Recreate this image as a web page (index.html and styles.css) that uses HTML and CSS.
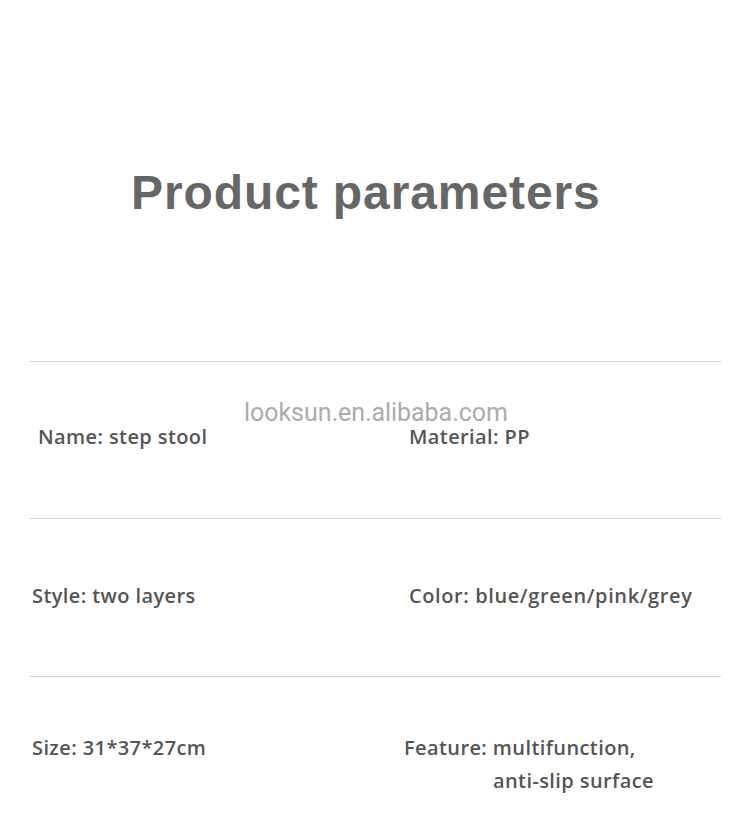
FILE: index.html
```html
<!DOCTYPE html>
<html>
<head>
<meta charset="utf-8">
<link rel="stylesheet" href="styles.css">
</head>
<body>
<div class="page">
  <h1 class="title">Product parameters</h1>
  <div class="table">
    <div class="row row-1">
      <div class="watermark">looksun.en.alibaba.com</div>
      <div class="cell cell-l1">Name: step stool</div>
      <div class="cell cell-r1">Material: PP</div>
    </div>
    <div class="row row-2">
      <div class="cell cell-l2">Style: two layers</div>
      <div class="cell cell-r2">Color: blue/green/pink/grey</div>
    </div>
    <div class="row row-3">
      <div class="cell cell-l3">Size: 31*37*27cm</div>
      <div class="cell cell-r3">Feature: multifunction,<br><span class="indent">anti-slip surface</span></div>
    </div>
  </div>
</div>
</body>
</html>
```
FILE: styles.css
```css
* { box-sizing: border-box; }
html, body { margin: 0; padding: 0; background: #fff; }
.page { width: 750px; height: 828px; overflow: hidden; }
.title {
  margin: 0;
  padding: 166px 0 0 131px;
  font-family: "Liberation Sans", Arial, sans-serif;
  font-weight: 700;
  font-size: 48px;
  line-height: 54px;
  color: #666;
  letter-spacing: 0.9px;
}
.table { margin: 141px 29px 0 30px; }
.row {
  position: relative;
  border-top: 1px solid #d4d4d4;
  display: grid;
  grid-template-columns: 370px 1fr;
  align-items: start;
}
.row-1 { height: 157px; padding-top: 62px; }
.row-1 .cell { line-height: 25px; }
.row-2 { height: 158px; padding-top: 60px; }
.row-3 { height: 150px; padding-top: 54px; }
.cell {
  font-family: "Open Sans", "Noto Sans", sans-serif;
  font-weight: 600;
  font-size: 20px;
  letter-spacing: 0.4px;
  color: #555;
  line-height: 33px;
}
.cell-l1 { padding-left: 8px; }
.cell-r1 { padding-left: 9px; }
.cell-l2 { padding-left: 2px; }
.cell-r2 { padding-left: 9px; letter-spacing: 0.6px; }
.cell-l3 { padding-left: 2px; }
.cell-r3 { padding-left: 4px; }
.indent { padding-left: 89px; }
.watermark {
  position: absolute;
  left: 214px;
  top: 40px;
  font-family: Roboto, "Liberation Sans", sans-serif;
  font-size: 25px;
  line-height: 22px;
  color: #ababab;
  letter-spacing: -0.05px;
}
```
